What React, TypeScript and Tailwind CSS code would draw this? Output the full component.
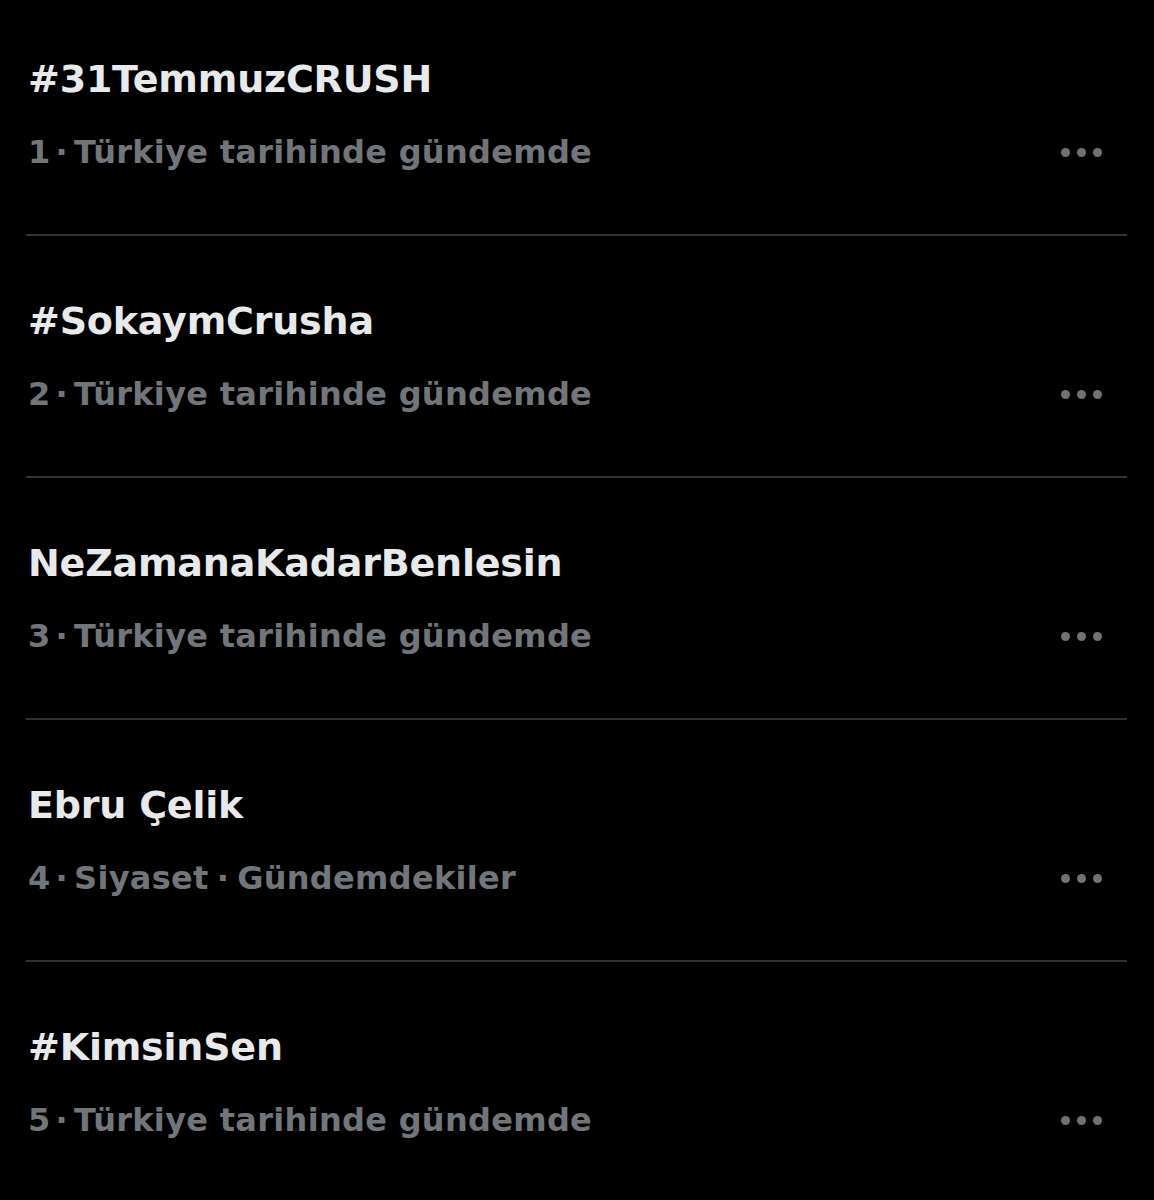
import React from "react";

const items = [
  { title: "#31TemmuzCRUSH", n: "1", sub: ["Türkiye tarihinde gündemde"] },
  { title: "#SokaymCrusha", n: "2", sub: ["Türkiye tarihinde gündemde"] },
  { title: "NeZamanaKadarBenlesin", n: "3", sub: ["Türkiye tarihinde gündemde"] },
  { title: "Ebru Çelik", n: "4", sub: ["Siyaset", "Gündemdekiler"] },
  { title: "#KimsinSen", n: "5", sub: ["Türkiye tarihinde gündemde"] },
];

function Dots() {
  return (
    <div className="flex items-center gap-[7px]">
      <span className="block w-[9px] h-[9px] rounded-full bg-[#6f7276]" />
      <span className="block w-[9px] h-[9px] rounded-full bg-[#6f7276]" />
      <span className="block w-[9px] h-[9px] rounded-full bg-[#6f7276]" />
    </div>
  );
}

export default function App() {
  return (
    <div
      className="w-[1154px] h-[1200px] bg-black overflow-hidden"
      style={{ fontFamily: "'DejaVu Sans', Inter, sans-serif" }}
    >
      {items.map((it, i) => (
        <div key={i}>
          <div className={`pl-[28px] pr-[52px] ${i === 0 ? "pt-[55px]" : "pt-[61px]"} pb-[62px]`}>
            <div className="h-[48px] flex items-center text-[38px] font-bold text-[#e7e9ea] whitespace-pre tracking-[-0.2px]">
              {it.title}
            </div>
            <div className="mt-[29px] h-[40px] flex items-center justify-between">
              <span className="text-[32px] font-bold text-[#71767b] whitespace-pre tracking-[0.3px]">
                {it.n}
                {it.sub.map((s, j) => (
                  <React.Fragment key={j}>
                    <span className={j === 0 ? "ml-[5px] mr-[6px]" : "mx-[8px]"}>·</span>
                    {s}
                  </React.Fragment>
                ))}
              </span>
              <Dots />
            </div>
          </div>
          {i < items.length - 1 && <div className="ml-[26px] w-[1101px] h-[2px] bg-[#2f3336]" />}
        </div>
      ))}
    </div>
  );
}
